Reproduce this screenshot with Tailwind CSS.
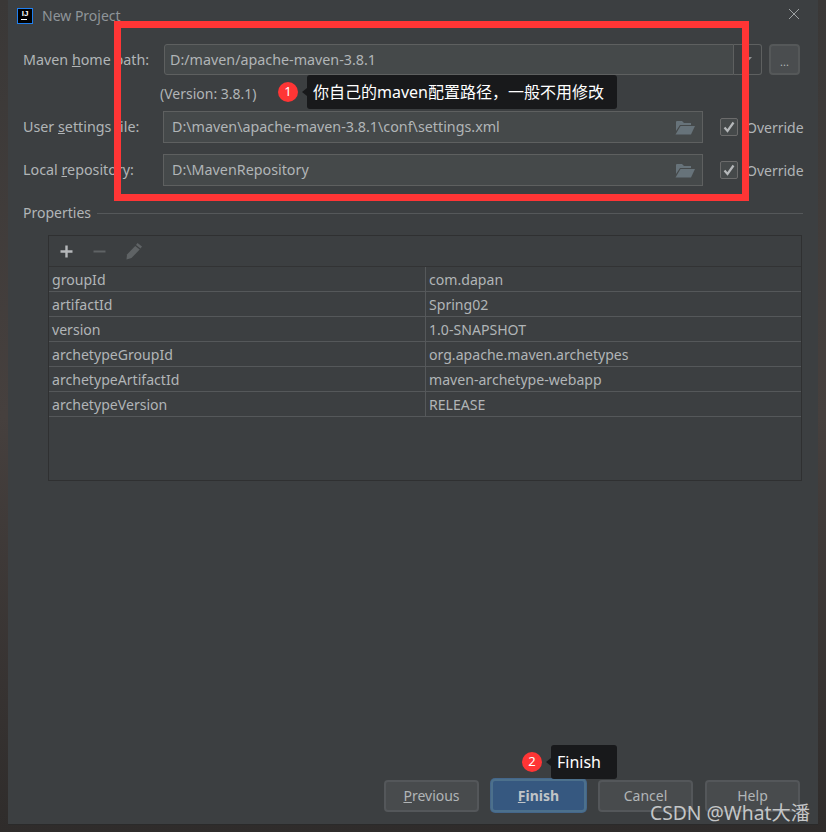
<!DOCTYPE html>
<html lang="en">

<head>
  <meta charset="UTF-8">
  <title>New Project</title>
  <script src="https://cdn.jsdelivr.net/npm/@tailwindcss/browser@4"></script>
</head>

<body class="bg-[#2b2a29]">
  <div class="relative w-[826px] h-[832px] overflow-hidden bg-gradient-to-b from-[#3a3837] via-[#46403e] to-[#2f2c2b] font-['Noto_Sans','Noto_Sans_CJK_SC',sans-serif] text-[14px] text-[#b1b5b7]">

    <!-- dialog -->
    <div class="ml-2 w-[810px] h-[824px] bg-[#3c3f41] flex flex-col shadow-[0_1px_0_#2a2a2a]">
      <!-- title bar -->
      <div class="h-[31px] flex items-center pl-[9px] pr-[18px] shrink-0">
        <div class="w-[16px] h-[16px] bg-black border border-[#1f7ff0] flex flex-col items-center justify-start pt-[1px] leading-none">
          <span class="text-[8px] font-bold text-white leading-[8px] font-['Liberation_Sans',sans-serif]">IJ</span>
          <span class="block w-[6px] h-[1px] bg-white mt-[1px] -ml-[3px]"></span>
        </div>
        <span class="ml-[9px] text-[#8f9599] text-[14px] leading-none">New Project</span>
        <svg class="ml-auto -mt-[3px]" width="12" height="12" viewBox="0 0 12 12" fill="none" stroke="#9ea2a4" stroke-width="1">
          <path d="M1 1 L11 11 M11 1 L1 11" />
        </svg>
      </div>

      <!-- form -->
      <div class="pl-[15px] pr-[15px] pt-[13px] flex flex-col shrink-0">
        <div class="flex items-center h-[31px] text-[14.3px]">
          <label class="w-[141px] shrink-0 whitespace-nowrap">Maven <u class="underline">h</u>ome path:</label>
          <div class="w-[570px] h-[31px] bg-[#45494a] border border-[#5e6060] rounded-l-[3px] px-[5px] flex items-center">D:/maven/apache-maven-3.8.1</div>
          <div class="w-[28px] h-[31px] border border-l-0 border-[#5e6060] rounded-r-[3px] flex items-center justify-center">
            <svg width="8" height="5" viewBox="0 0 8 5"><path d="M0 0 H8 L4 4.5 Z" fill="#8e9193" /></svg>
          </div>
          <div class="ml-[7px] w-[31px] h-[31px] bg-[#4a4d4f] border-2 border-[#555859] rounded-[4px] flex items-center justify-center text-[11px] leading-none pt-[3px]">...</div>
        </div>

        <div class="h-[36px] pl-[137px] flex items-center">(Version: 3.8.1)</div>

        <div class="flex items-center h-[32px]">
          <label class="w-[140px] shrink-0 whitespace-nowrap text-[14.3px]">User <u class="underline">s</u>ettings file:</label>
          <div class="w-[540px] h-[32px] shrink-0 bg-[#45494a] border border-[#5e6060] pl-[8px] pr-[7px] flex items-center justify-between text-[14.3px]">
            <span>D:\maven\apache-maven-3.8.1\conf\settings.xml</span>
            <svg width="20" height="15" viewBox="0 0 20 15" fill="#67737a"><path d="M1 2 Q1 1 2 1 H7 L9 3 H16 V5 H5 L1 11 Z" /><path d="M5.5 6 H20 L16 14.5 H0.5 Z" /></svg>
          </div>
          <div class="ml-[17px] w-[18px] h-[18px] shrink-0 bg-[#45494a] border border-[#6b6b6b] rounded-[2px] flex items-center justify-center">
            <svg width="12" height="12" viewBox="0 0 12 12" fill="none" stroke="#b5b8ba" stroke-width="2.2"><path d="M1.5 6.5 L4.5 10 L10.5 1.5" /></svg>
          </div>
          <span class="ml-[8px] whitespace-nowrap">Override</span>
        </div>

        <div class="flex items-center h-[32px] mt-[11px]">
          <label class="w-[140px] shrink-0 whitespace-nowrap text-[14.3px]">Local <u class="underline">r</u>epository:</label>
          <div class="w-[540px] h-[32px] shrink-0 bg-[#45494a] border border-[#5e6060] pl-[8px] pr-[7px] flex items-center justify-between text-[14.3px]">
            <span>D:\MavenRepository</span>
            <svg width="20" height="15" viewBox="0 0 20 15" fill="#67737a"><path d="M1 2 Q1 1 2 1 H7 L9 3 H16 V5 H5 L1 11 Z" /><path d="M5.5 6 H20 L16 14.5 H0.5 Z" /></svg>
          </div>
          <div class="ml-[17px] w-[18px] h-[18px] shrink-0 bg-[#45494a] border border-[#6b6b6b] rounded-[2px] flex items-center justify-center">
            <svg width="12" height="12" viewBox="0 0 12 12" fill="none" stroke="#b5b8ba" stroke-width="2.2"><path d="M1.5 6.5 L4.5 10 L10.5 1.5" /></svg>
          </div>
          <span class="ml-[8px] whitespace-nowrap">Override</span>
        </div>

        <!-- properties -->
        <div class="flex items-center mt-[16px] h-[22px]">
          <span class="-mt-[2px]">Properties</span>
          <div class="flex-1 h-px bg-[#55585a] ml-[6px]"></div>
        </div>

        <div class="ml-[25px] mt-[11px] w-[754px] h-[246px] border border-[#2f3031] flex flex-col">
          <div class="h-[31px] flex items-center gap-[18px] pl-[10px] border-b border-[#323334] shrink-0">
            <svg width="15" height="15" viewBox="0 0 15 15" fill="#b5b8ba"><path d="M6.3 1.5 H8.7 V6.3 H13.5 V8.7 H8.7 V13.5 H6.3 V8.7 H1.5 V6.3 H6.3 Z" /></svg>
            <svg width="15" height="15" viewBox="0 0 15 15" fill="#5f6365"><path d="M1.5 6.5 H13.5 V8.5 H1.5 Z" /></svg>
            <svg width="18" height="18" viewBox="0 0 18 18" fill="#5f6365"><path d="M12.5 1 L17 4.5 L15.5 6.5 L11 3 Z" /><path d="M10.2 4 L14.7 7.5 L6.5 16 L1.5 17.5 L2 12.5 Z" /></svg>
          </div>
          <div class="grid grid-cols-[377px_1fr] text-[14.1px] leading-[26px]">
            <div class="h-[25px] border-b border-r border-[#55585a] pl-[3px]">groupId</div>
            <div class="h-[25px] border-b border-[#55585a] pl-[3px]">com.dapan</div>
            <div class="h-[25px] border-b border-r border-[#55585a] pl-[3px]">artifactId</div>
            <div class="h-[25px] border-b border-[#55585a] pl-[3px]">Spring02</div>
            <div class="h-[25px] border-b border-r border-[#55585a] pl-[3px]">version</div>
            <div class="h-[25px] border-b border-[#55585a] pl-[3px]">1.0-SNAPSHOT</div>
            <div class="h-[25px] border-b border-r border-[#55585a] pl-[3px]">archetypeGroupId</div>
            <div class="h-[25px] border-b border-[#55585a] pl-[3px]">org.apache.maven.archetypes</div>
            <div class="h-[25px] border-b border-r border-[#55585a] pl-[3px]">archetypeArtifactId</div>
            <div class="h-[25px] border-b border-[#55585a] pl-[3px]">maven-archetype-webapp</div>
            <div class="h-[25px] border-b border-r border-[#55585a] pl-[3px]">archetypeVersion</div>
            <div class="h-[25px] border-b border-[#55585a] pl-[3px]">RELEASE</div>
          </div>
        </div>
      </div>

      <!-- buttons -->
      <div class="mt-auto mb-[12px] pr-[18px] flex justify-end items-center gap-[12px]">
        <button class="w-[95px] h-[32px] bg-[#484b4d] border-2 border-[#54575a] rounded-[4px]"><u class="underline">P</u>revious</button>
        <button class="w-[95px] h-[33px] bg-[#365880] border-2 border-[#4c708c] rounded-[4px] font-bold text-[#c0c4c7] ring-1 ring-[#44668a]"><u class="underline">F</u>inish</button>
        <button class="w-[95px] h-[32px] bg-[#484b4d] border-2 border-[#54575a] rounded-[4px]">Cancel</button>
        <button class="w-[95px] h-[32px] bg-[#484b4d] border-2 border-[#54575a] rounded-[4px]">Help</button>
      </div>
    </div>

    <!-- red annotation box -->
    <div class="absolute left-[114px] top-[21px] w-[635px] h-[180px] border-[7px] border-[#ff3535]"></div>

    <!-- note 1 -->
    <div class="absolute left-[278px] top-[82px] w-[20px] h-[20px] rounded-full bg-[#ff3535] text-white text-[13px] flex items-center justify-center">1</div>
    <div class="absolute left-[302px] top-[88px] w-0 h-0 border-y-[4px] border-y-transparent border-r-[5px] border-r-[#18191b]"></div>
    <div class="absolute left-[307px] top-[75px] w-[310px] h-[34px] bg-[#18191b] rounded-[3px] pl-[6px] flex items-center text-white text-[16px] whitespace-nowrap">你自己的maven配置路径，一般不用修改</div>

    <!-- note 2 -->
    <div class="absolute left-[522px] top-[752px] w-[20px] h-[20px] rounded-full bg-[#ff3535] text-white text-[13px] flex items-center justify-center">2</div>
    <div class="absolute left-[546px] top-[758px] w-0 h-0 border-y-[4px] border-y-transparent border-r-[5px] border-r-[#18191b]"></div>
    <div class="absolute left-[551px] top-[745px] w-[66px] h-[34px] bg-[#18191b] rounded-[3px] pl-[6px] flex items-center text-white text-[16px]">Finish</div>

    <!-- watermark -->
    <div class="absolute left-[650px] top-[800px] text-[19.3px] leading-[26px] text-[#c4c6c7] whitespace-nowrap">CSDN @What大潘</div>
  </div>
</body>

</html>
